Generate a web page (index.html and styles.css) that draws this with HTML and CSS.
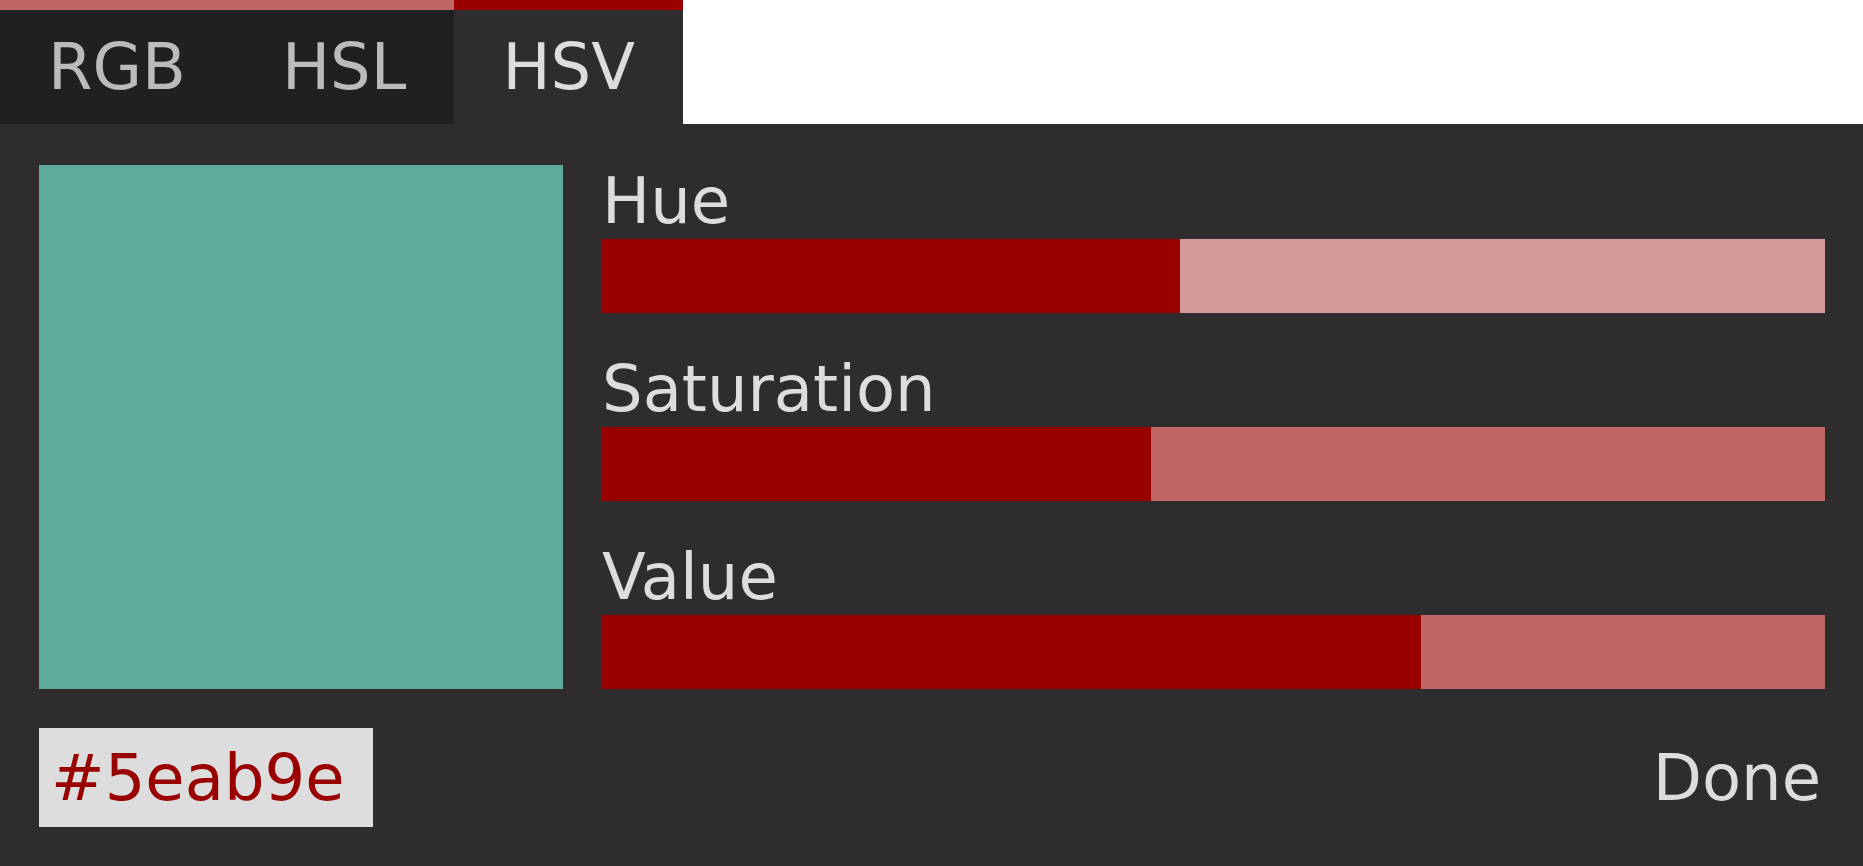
FILE: index.html
```
<!DOCTYPE html>
<html lang="en">
<head>
<meta charset="utf-8">
<meta name="viewport" content="width=device-width, initial-scale=1">
<title>Color picker</title>
<link rel="stylesheet" href="styles.css">
</head>
<body>
<main class="picker">
  <div class="tabs" role="tablist">
    <button class="tab" type="button" role="tab" aria-selected="false">RGB</button>
    <button class="tab" type="button" role="tab" aria-selected="false">HSL</button>
    <button class="tab tab-active" type="button" role="tab" aria-selected="true" aria-controls="hsv-panel">HSV</button>
  </div>
  <form class="panel" id="hsv-panel" role="tabpanel">
    <div class="editor">
      <div class="swatch"></div>
      <div class="channels">
        <div class="channel">
          <label class="channel-label" for="hue">Hue</label>
          <input class="slider slider-hover" id="hue" type="range" min="0" max="360" value="170" style="--fill: 47.22%">
        </div>
        <div class="channel">
          <label class="channel-label" for="saturation">Saturation</label>
          <input class="slider" id="saturation" type="range" min="0" max="100" value="45" style="--fill: 44.9%">
        </div>
        <div class="channel">
          <label class="channel-label" for="value">Value</label>
          <input class="slider" id="value" type="range" min="0" max="100" value="67" style="--fill: 67%">
        </div>
      </div>
    </div>
    <div class="footer">
      <input class="hex" type="text" value="#5eab9e" aria-label="Hex color" spellcheck="false">
      <button class="done" type="button">Done</button>
    </div>
  </form>
</main>
</body>
</html>
```

FILE: styles.css
```
* {
  box-sizing: border-box;
}

body {
  margin: 0;
  background: #fff;
}

body,
button,
input {
  font-family: "DejaVu Sans", sans-serif;
  font-size: 64px;
  line-height: 74px;
}

button,
input {
  margin: 0;
  border: 0;
  border-radius: 0;
}

.picker {
  display: flex;
  flex-direction: column;
  min-height: 100vh;
  color: #ddd;
}

.tabs {
  display: flex;
}

.tab {
  padding: 20px 48px;
  border-top: 10px solid #c16666;
  background: #202020;
  color: #bbb;
}

.tab-active {
  border-top-color: #900;
  background: #2e2c2d;
  color: #ddd;
}

.panel {
  display: flex;
  flex: 1;
  flex-direction: column;
  gap: 39px;
  padding: 41px 38px 39px 39px;
  background: #2e2c2d;
}

.editor {
  display: flex;
  gap: 39px;
}

.swatch {
  flex: 0 0 524px;
  background: #5eab9e;
}

.channels {
  display: flex;
  flex: 1;
  flex-direction: column;
  gap: 40px;
  min-width: 0;
}

.channel {
  display: flex;
  flex-direction: column;
}

.channel-label {
  padding-bottom: 2px;
  line-height: 72px;
}

.slider {
  --track: #c16666;
  width: 100%;
  height: 74px;
  appearance: none;
  background: linear-gradient(to right, #900 var(--fill), var(--track) var(--fill));
}

.slider-hover {
  --track: #d69999;
}

.slider::-webkit-slider-thumb {
  width: 1px;
  height: 74px;
  appearance: none;
  background: transparent;
}

.footer {
  display: flex;
  justify-content: space-between;
}

.hex {
  width: 334px;
  padding: 13px 12px 12px;
  background: #ddd;
  color: #900;
}

.done {
  padding: 13px 4px 12px;
  background: transparent;
  color: #ddd;
}
```
